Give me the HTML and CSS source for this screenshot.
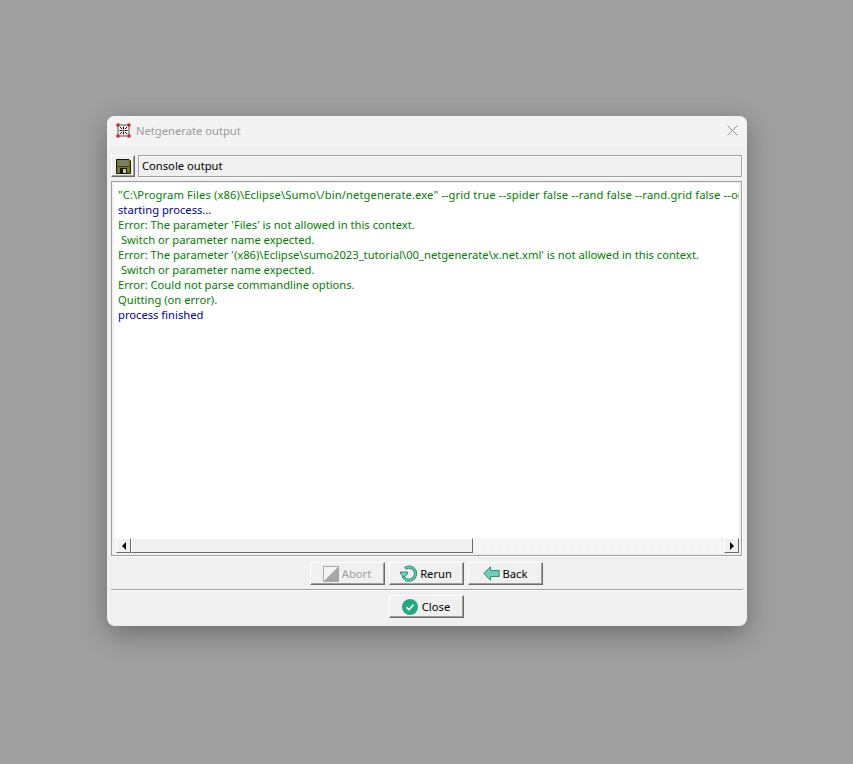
FILE: index.html
```html
<!DOCTYPE html>
<html lang="en">
<head>
<meta charset="utf-8">
<title>Netgenerate output</title>
<link rel="stylesheet" href="styles.css">
</head>
<body>
<div class="window">
  <div class="titlebar">
    <svg class="app-icon" width="15" height="15" viewBox="0 0 15 15">
      <path d="M2 2H13V13H2Z" fill="none" stroke="#555" stroke-width="1"/>
      <path d="M4 4L6 6M11 4L9 6M4 11L6 9M11 11L9 9M7.5 3.5V6M7.5 9V11.5M3.5 7.5H6M9 7.5H11.5" stroke="#111" stroke-width="1" fill="none"/>
      <rect x="6.5" y="6.5" width="2" height="2" fill="#d81818"/>
      <rect x="0.5" y="0.5" width="3" height="3" fill="#d81818"/>
      <rect x="11.5" y="0.5" width="3" height="3" fill="#d81818"/>
      <rect x="0.5" y="11.5" width="3" height="3" fill="#d81818"/>
      <rect x="11.5" y="11.5" width="3" height="3" fill="#d81818"/>
    </svg>
    <span class="title">Netgenerate output</span>
    <svg class="close-x" width="11" height="11" viewBox="0 0 11 11">
      <path d="M0.5 0.5L10.5 10.5M10.5 0.5L0.5 10.5" stroke="#8f8f8f" stroke-width="1" fill="none"/>
    </svg>
  </div>
  <div class="content">
    <div class="toolbar">
      <div class="icon-btn">
        <svg width="15" height="15" viewBox="0 0 15 15">
          <path d="M0.5 0.5H13L14.5 2V14.5H0.5Z" fill="#808000" stroke="#141408" stroke-width="1"/>
          <rect x="3" y="1" width="9" height="6" fill="#7c7f68"/>
          <rect x="1" y="7" width="13" height="1" fill="#3c3c10"/>
          <rect x="4" y="9" width="7" height="5" fill="#141408"/>
          <rect x="7" y="10" width="3" height="4" fill="#c4c4c4"/>
        </svg>
      </div>
      <div class="label-box">Console output</div>
    </div>
    <div class="console">
      <div class="console-text">
        <div class="line line-cmd green">"C:\Program Files (x86)\Eclipse\Sumo\/bin/netgenerate.exe" --grid true --spider false --rand false --rand.grid false --output-file</div>
        <div class="line blue">starting process...</div>
        <div class="line green">Error: The parameter 'Files' is not allowed in this context.</div>
        <div class="line green">&nbsp;Switch or parameter name expected.</div>
        <div class="line green">Error: The parameter '(x86)\Eclipse\sumo2023_tutorial\00_netgenerate\x.net.xml' is not allowed in this context.</div>
        <div class="line green">&nbsp;Switch or parameter name expected.</div>
        <div class="line green">Error: Could not parse commandline options.</div>
        <div class="line green">Quitting (on error).</div>
        <div class="line blue">process finished</div>
      </div>
      <div class="scrollbar">
        <div class="arrow-btn"><span class="tri tri-left"></span></div>
        <div class="thumb"></div>
        <div class="track"></div>
        <div class="arrow-btn"><span class="tri tri-right"></span></div>
      </div>
    </div>
    <div class="btn-row">
      <div class="btn disabled">
        <svg width="16" height="16" viewBox="0 0 16 16">
          <rect x="0.5" y="0.5" width="15" height="15" fill="#f4f4f4" stroke="#a8a8a8"/>
          <path d="M15 1V15H1Z" fill="#a6a6a6"/>
        </svg>
        <span>Abort</span>
      </div>
      <div class="btn">
        <svg width="17" height="17" viewBox="0 0 17 17">
          <path d="M5 3.5A6.5 6.5 0 1 1 3 11" fill="none" stroke="#2f8f7c" stroke-width="3.2"/>
          <path d="M5 3.5A6.5 6.5 0 1 1 3 11" fill="none" stroke="#6fcdb9" stroke-width="1.2"/>
          <path d="M0.5 7H7.5V9L4 12L0.5 9Z" fill="#6fcdb9" stroke="#2f8f7c" stroke-width="1"/>
        </svg>
        <span>Rerun</span>
      </div>
      <div class="btn">
        <svg width="17" height="15" viewBox="0 0 17 15">
          <path d="M0.8 7.5L7.5 0.8V4.5H16.2V10.5H7.5V14.2Z" fill="#6fcdb9" stroke="#2f8f7c" stroke-width="1"/>
        </svg>
        <span>Back</span>
      </div>
    </div>
    <div class="sep"></div>
    <div class="btn-row last">
      <div class="btn btn-close">
        <svg width="16" height="16" viewBox="0 0 16 16">
          <circle cx="8" cy="8" r="8" fill="#25a884"/>
          <path d="M4.5 8.3L7 10.7L11.5 5.8" fill="none" stroke="#fff" stroke-width="1.6"/>
        </svg>
        <span>Close</span>
      </div>
    </div>
  </div>
</div>
</body>
</html>
```

FILE: styles.css
```css
* { box-sizing: border-box; }
html, body { margin: 0; height: 100%; }
body {
  background: #a0a0a0;
  padding: 116px 106px 138px 107px;
  font-family: "Noto Sans", "Open Sans", sans-serif;
  font-size: 11.2px;
  color: #000;
  overflow: hidden;
}
.window {
  width: 640px;
  height: 510px;
  background: #f0f0f0;
  border-radius: 8px;
  overflow: hidden;
  box-shadow: 0 8px 28px rgba(0, 0, 0, 0.32);
  display: flex;
  flex-direction: column;
}
.titlebar {
  height: 31px;
  background: #f3f3f3;
  display: flex;
  align-items: center;
  padding: 0 9px 2px 9px;
  flex: none;
}
.app-icon { flex: none; }
.title { margin-left: 5px; color: #9a9a9a; }
.close-x { margin-left: auto; flex: none; }
.content {
  flex: 1;
  display: flex;
  flex-direction: column;
  padding: 8px 5px 0 4px;
  min-height: 0;
}
.toolbar { display: flex; gap: 3px; height: 22px; flex: none; }
.icon-btn {
  width: 24px;
  height: 22px;
  background: #f0f0f0;
  border: 1px solid;
  border-color: #fff #6a6a6a #6a6a6a #fff;
  box-shadow: inset -1px -1px 0 #a0a0a0;
  display: flex;
  align-items: center;
  justify-content: center;
}
.label-box {
  flex: 1;
  height: 22px;
  border: 1px solid #a0a0a0;
  box-shadow: inset 1px 1px 0 #fff, 1px 1px 0 #fff;
  padding-left: 3px;
  line-height: 20px;
  white-space: nowrap;
}
.console {
  margin-top: 4px;
  height: 375px;
  flex: none;
  border: 1px solid #a0a0a0;
  box-shadow: 1px 1px 0 #fff;
  padding: 1px 2px 2px 2px;
  display: flex;
  flex-direction: column;
}
.console-text {
  flex: 1;
  min-height: 0;
  background: #fff;
  overflow: hidden;
  padding: 4px 0 0 4px;
}
.line { height: 15px; line-height: 15px; white-space: pre; }
.line-cmd { letter-spacing: 0.12px; }
.green { color: #008000; }
.blue { color: #00009c; }
.scrollbar {
  height: 15px;
  flex: none;
  display: flex;
  margin-left: 2px;
  background: #fff;
}
.arrow-btn {
  width: 15px;
  height: 15px;
  flex: none;
  background: #f0f0f0;
  border: 1px solid;
  border-color: #fff #6a6a6a #6a6a6a #fff;
  display: flex;
  align-items: center;
  justify-content: center;
}
.tri { width: 0; height: 0; border-style: solid; border-color: transparent; }
.tri-left { border-width: 4px 4px 4px 0; border-right-color: #000; }
.tri-right { border-width: 4px 0 4px 4px; border-left-color: #000; }
.thumb {
  width: 342px;
  flex: none;
  background: #f0f0f0;
  border: 1px solid;
  border-color: #fff #6a6a6a #6a6a6a #fff;
}
.track {
  flex: 1;
  background-color: #f6f6f6;
  background-image: repeating-conic-gradient(#ececec 0 25%, #fff 0 50%);
  background-size: 2px 2px;
}
.btn-row {
  display: flex;
  justify-content: center;
  gap: 4px;
  margin-top: 6px;
  padding-right: 1px;
  flex: none;
}
.btn-row.last { margin-top: 4px; }
.btn {
  width: 75px;
  height: 23px;
  background: #f0f0f0;
  border: 1px solid;
  border-color: #fff #6a6a6a #6a6a6a #fff;
  box-shadow: inset -1px -1px 0 #a0a0a0;
  display: flex;
  align-items: center;
  justify-content: center;
  gap: 3px;
  white-space: nowrap;
}
.btn-close { gap: 4px; }
.btn.disabled { color: #a0a0a0; }
.sep {
  margin-top: 4px;
  height: 2px;
  flex: none;
  background: #a0a0a0;
  border-bottom: 1px solid #fff;
  margin-right: -1px;
}
```
